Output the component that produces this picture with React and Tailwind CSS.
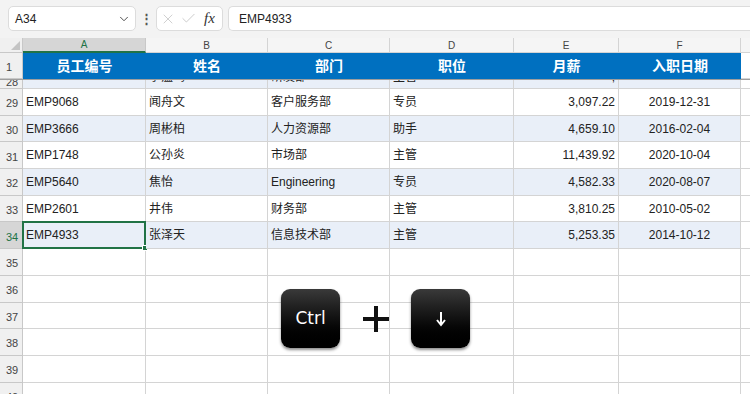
import { ChevronDown, X, Check } from 'lucide-react'

const cols = [
    { key: 'A', w: 'w-[123px]' },
    { key: 'B', w: 'w-[122px]' },
    { key: 'C', w: 'w-[122px]' },
    { key: 'D', w: 'w-[124px]' },
    { key: 'E', w: 'w-[105px]' },
    { key: 'F', w: 'w-[122px]' },
]

const headers = ['员工编号', '姓名', '部门', '职位', '月薪', '入职日期']

// row 28 sits under the frozen header, only the bottoms of its glyphs show
const row28 = ['', '李温鸣', '研发部', '主管', ',', '']

const rows = [
    { n: 29, d: ['EMP9068', '闻舟文', '客户服务部', '专员', '3,097.22', '2019-12-31'] },
    { n: 30, d: ['EMP3666', '周彬柏', '人力资源部', '助手', '4,659.10', '2016-02-04'] },
    { n: 31, d: ['EMP1748', '公孙炎', '市场部', '主管', '11,439.92', '2020-10-04'] },
    { n: 32, d: ['EMP5640', '焦怡', 'Engineering', '专员', '4,582.33', '2020-08-07'] },
    { n: 33, d: ['EMP2601', '井伟', '财务部', '主管', '3,810.25', '2010-05-02'] },
    { n: 34, d: ['EMP4933', '张泽天', '信息技术部', '主管', '5,253.35', '2014-10-12'] },
]

const emptyRows = [35, 36, 37, 38, 39, 40]

const font = { fontFamily: '"Liberation Sans", "Noto Sans CJK SC", sans-serif' }

function align(i) {
    if (i === 4) return 'justify-end pr-[3px]'
    if (i === 5) return 'justify-center'
    return 'justify-start pl-[3px]'
}

function RowNum({ n, active }) {
    return (
        <div className={`w-[23px] shrink-0 h-full flex items-end justify-start pl-[6px] pb-[3px] text-[11px] border-r border-b border-[#c8c8c8] ${active ? 'bg-[#d6d6d6] text-[#217346]' : 'bg-[#f0f0f0] text-[#444]'}`}>
            {n}
        </div>
    )
}

function DataRow({ n, d }) {
    const even = n % 2 === 0
    const active = n === 34
    return (
        <div className="flex h-[26.7px]">
            <RowNum n={n} active={active} />
            {cols.map((c, i) => (
                <div
                    key={c.key}
                    className={`${c.w} shrink-0 relative flex items-center ${align(i)} border-r border-b border-[#d4d4d4] text-[12px] text-[#222] ${even ? 'bg-[#e9eff8]' : 'bg-white'}`}
                >
                    {d[i]}
                    {active && i === 0 && (
                        <div className="absolute -left-px -top-px -right-px -bottom-px border-2 border-[#217346]">
                            <div className="absolute -right-[4px] -bottom-[4px] w-[6px] h-[6px] bg-[#217346] border border-white" />
                        </div>
                    )}
                </div>
            ))}
            <div className="flex-1 bg-white border-b border-[#d4d4d4]" />
        </div>
    )
}

function Key({ children }) {
    return (
        <div className="w-[59px] h-[59px] rounded-[9px] bg-gradient-to-b from-[#3a3a3a] via-[#111] to-[#000] shadow-[0_2px_3px_rgba(0,0,0,0.45)] flex items-center justify-center text-white">
            {children}
        </div>
    )
}

export default function App() {
    return (
        <div className="w-[750px] h-[394px] overflow-hidden bg-white relative" style={font}>
            {/* formula bar */}
            <div className="h-[38px] bg-[#f3f3f3] flex items-start pt-[6px] pl-[8px]">
                <div className="w-[128px] h-[25px] bg-white border border-[#dcdcdc] rounded-[5px] flex items-center justify-between pl-[6px] pr-[4px] text-[12px] text-[#222]">
                    <span>A34</span>
                    <ChevronDown size={14} strokeWidth={1.6} className="text-[#444]" />
                </div>
                <div className="w-[20px] h-[25px] flex items-center justify-center text-[#555] text-[13px] font-bold">⋮</div>
                <div className="w-[67px] h-[25px] bg-white border border-[#dcdcdc] rounded-[5px] flex items-center pl-[3px] gap-[4px]">
                    <X size={16} strokeWidth={1} className="text-[#b8b8b8]" />
                    <Check size={17} strokeWidth={1} className="text-[#b8b8b8]" />
                    <span className="text-[15px] italic text-[#333] ml-[3px]" style={{ fontFamily: '"Liberation Serif", serif' }}>fx</span>
                </div>
                <div className="ml-[5px] flex-1 h-[25px] bg-white border border-[#dcdcdc] rounded-l-[5px] border-r-0 flex items-center pl-[10px] text-[12px] text-[#222]">
                    EMP4933
                </div>
            </div>

            {/* column headers */}
            <div className="flex h-[15px] bg-[#f5f5f5] text-[10px] text-[#444]">
                <div className="w-[23px] shrink-0 relative border-r border-b border-[#c8c8c8] bg-[#f0f0f0]">
                    <div className="absolute right-[2px] bottom-[2px] w-0 h-0 border-l-[9px] border-l-transparent border-b-[9px] border-b-[#c4c4c4]" />
                </div>
                {cols.map((c, i) => (
                    <div
                        key={c.key}
                        className={`${c.w} shrink-0 flex items-center justify-center border-r ${i === 0 ? 'bg-[#d6d6d6] text-[#217346] border-b-2 border-b-[#217346] border-r-[#c8c8c8]' : 'border-b border-[#d4d4d4]'}`}
                    >
                        {c.key}
                    </div>
                ))}
                <div className="flex-1 border-b border-[#d4d4d4]" />
            </div>

            {/* header row 1 */}
            <div className="flex h-[26px]">
                <RowNum n={1} />
                {cols.map((c, i) => (
                    <div key={c.key} className={`${c.w} shrink-0 bg-[#0070c0] flex items-center justify-center text-white text-[14px] font-bold`}>
                        {headers[i]}
                    </div>
                ))}
                <div className="flex-1 bg-white border-b border-[#d4d4d4]" />
            </div>

            {/* frozen split + partial row 28 */}
            <div className="flex h-[10px] border-t border-[#9e9e9e] overflow-hidden">
                <div className="w-[23px] shrink-0 bg-[#f0f0f0] border-r border-b border-[#c8c8c8] text-[11px] text-[#444] pl-[6px] leading-[12px] -mt-[4px]">28</div>
                {cols.map((c, i) => (
                    <div key={c.key} className={`${c.w} shrink-0 bg-[#e9eff8] border-r border-b border-[#d4d4d4] overflow-hidden flex ${align(i)}`}>
                        {row28[i] && (
                            <span className="text-[12px] text-[#222] leading-[16px] -mt-[11px]">{row28[i]}</span>
                        )}
                    </div>
                ))}
                <div className="flex-1 bg-white border-b border-[#d4d4d4]" />
            </div>

            {rows.map(r => (
                <DataRow key={r.n} n={r.n} d={r.d} />
            ))}

            {emptyRows.map(n => (
                <div key={n} className="flex h-[26.7px]">
                    <RowNum n={n} />
                    {cols.map(c => (
                        <div key={c.key} className={`${c.w} shrink-0 border-r border-b border-[#d4d4d4] bg-white`} />
                    ))}
                    <div className="flex-1 bg-white border-b border-[#d4d4d4]" />
                </div>
            ))}

            {/* keyboard shortcut overlay */}
            <div className="absolute left-[281px] top-[289px] flex items-center">
                <Key>
                    <span className="text-[17px]" style={{ fontFamily: '"DejaVu Sans", sans-serif' }}>Ctrl</span>
                </Key>
                <div className="w-[71px] h-[59px] flex items-center justify-center">
                    <svg width="28" height="28" viewBox="0 0 28 28">
                        <path d="M14 1v26M1 14h26" stroke="#111" strokeWidth="4" />
                    </svg>
                </div>
                <Key>
                    <svg width="12" height="16" viewBox="0 0 12 16">
                        <path d="M6 1v12M2 9l4 5 4-5" stroke="white" strokeWidth="2" fill="none" />
                    </svg>
                </Key>
            </div>
        </div>
    )
}
